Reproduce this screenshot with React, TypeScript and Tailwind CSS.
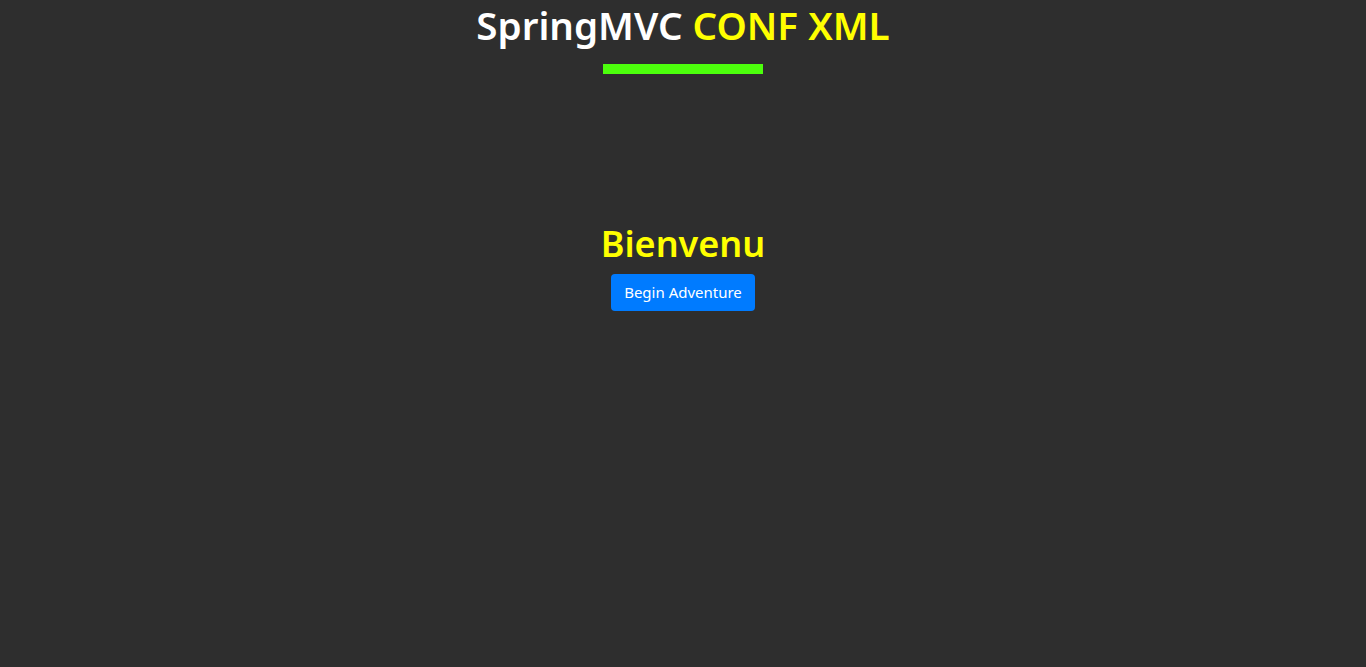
export default function App() {
  return (
    <div className="min-h-screen bg-[#2e2e2e] font-['Noto_Sans',sans-serif] text-center">
      <h1 className="pt-[2px] text-[38.6px] leading-[46px] font-semibold text-white">
        SpringMVC <span className="text-[#ffff00]">CONF XML</span>
      </h1>
      <div className="mx-auto mt-4 h-[10px] w-[160px] bg-[#4cff0c]" />
      <div className="mt-[149px] flex flex-col items-center">
        <h2 className="text-[36px] leading-[42px] font-semibold text-[#ffff00]">Bienvenu</h2>
        <button className="mt-[9px] h-[37px] rounded-[4px] bg-[#007bff] px-[13px] text-[15px] text-white">
          Begin Adventure
        </button>
      </div>
    </div>
  )
}
